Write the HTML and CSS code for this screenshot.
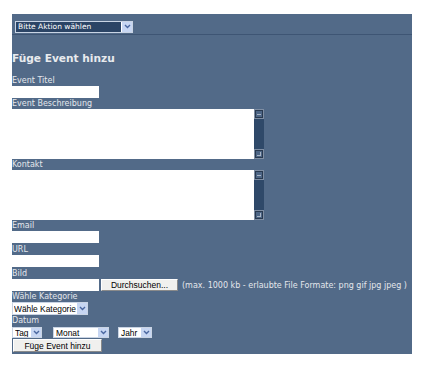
FILE: index.html
```html
<!DOCTYPE html>
<html lang="de">
<head>
    <meta charset="UTF-8">
    <meta name="viewport" content="width=device-width, initial-scale=1.0">
    <title>Füge Event hinzu</title>
    <link rel="stylesheet" href="styles.css">
</head>
<body>
    <div class="panel">

        <!-- Aktion -->
        <div class="topbar">
            <span class="select select-action">
                <select><option>Bitte Aktion wählen</option></select>
                <span class="arrow"><svg width="7" height="5" viewBox="0 0 7 5"><polyline points="1,1 3.5,3.5 6,1" fill="none" stroke="#4a67a0" stroke-width="1.4"/></svg></span>
            </span>
        </div>

        <h2>Füge Event hinzu</h2>

        <form class="event-form">
            <label>Event Titel</label>
            <input class="field field-first" type="text">

            <label>Event Beschreibung</label>
            <div class="textbox">
                <textarea></textarea>
                <div class="scroll">
                    <span class="scroll-btn"><i class="dash"></i></span>
                    <span class="scroll-track"></span>
                    <span class="scroll-btn"><i class="grip"></i></span>
                </div>
            </div>

            <label>Kontakt</label>
            <div class="textbox">
                <textarea></textarea>
                <div class="scroll">
                    <span class="scroll-btn"><i class="dash"></i></span>
                    <span class="scroll-track"></span>
                    <span class="scroll-btn"><i class="grip"></i></span>
                </div>
            </div>

            <label>Email</label>
            <input class="field" type="text">

            <label>URL</label>
            <input class="field" type="text">

            <label>Bild</label>
            <div class="file-row">
                <input class="field" type="text">
                <button type="button" class="btn btn-browse">Durchsuchen...</button>
                <span class="note">(max. 1000 kb - erlaubte File Formate: png gif jpg jpeg )</span>
            </div>

            <label>Wähle Kategorie</label>
            <span class="select select-cat">
                <select><option>Wähle Kategorie</option></select>
                <span class="arrow"><svg width="7" height="5" viewBox="0 0 7 5"><polyline points="1,1 3.5,3.5 6,1" fill="none" stroke="#4a67a0" stroke-width="1.4"/></svg></span>
            </span>

            <label>Datum</label>
            <div class="date-row">
                <span class="select select-tag">
                    <select><option>Tag</option></select>
                    <span class="arrow"><svg width="7" height="5" viewBox="0 0 7 5"><polyline points="1,1 3.5,3.5 6,1" fill="none" stroke="#4a67a0" stroke-width="1.4"/></svg></span>
                </span>
                <span class="select select-monat">
                    <select><option>Monat</option></select>
                    <span class="arrow"><svg width="7" height="5" viewBox="0 0 7 5"><polyline points="1,1 3.5,3.5 6,1" fill="none" stroke="#4a67a0" stroke-width="1.4"/></svg></span>
                </span>
                <span class="select select-jahr">
                    <select><option>Jahr</option></select>
                    <span class="arrow"><svg width="7" height="5" viewBox="0 0 7 5"><polyline points="1,1 3.5,3.5 6,1" fill="none" stroke="#4a67a0" stroke-width="1.4"/></svg></span>
                </span>
            </div>

            <button type="button" class="btn btn-submit">Füge Event hinzu</button>
        </form>
    </div>
</body>
</html>
```

FILE: styles.css
```css
body {
    margin: 0;
    background: #fff;
    font-family: "DejaVu Sans", Verdana, sans-serif;
}
.panel {
    width: 400px;
    margin: 14px 0 0 12px;
    padding-bottom: 2px;
    background: #526a88;
    color: #e4e7ec;
}
.topbar {
    height: 20px;
    border-bottom: 1px solid #3e5574;
}
h2 {
    margin: 16px 0 10px 0;
    font-size: 10.6px;
    line-height: 14px;
    font-weight: bold;
    color: #e8eaee;
}
.event-form {
    display: flex;
    flex-direction: column;
    align-items: flex-start;
}
.event-form label {
    display: block;
    height: 11px;
    line-height: 11px;
    font-size: 8px;
}
.field {
    box-sizing: border-box;
    width: 87px;
    height: 12px;
    margin: 0 0 1px 0;
    padding: 0;
    border: 0;
    background: #fff;
}
.field-first {
    margin-bottom: 0;
}
.textbox {
    display: flex;
    height: 50px;
}
.textbox textarea {
    width: 242px;
    height: 50px;
    box-sizing: border-box;
    margin: 0;
    padding: 0;
    border: 0;
    resize: none;
    background: #fff;
}
.scroll {
    display: flex;
    flex-direction: column;
    width: 10px;
    background: #2f4969;
}
.scroll-btn {
    height: 10px;
    box-sizing: border-box;
    border: 1px solid #7f8ea3;
    outline: 1px solid #28394f;
    outline-offset: -2px;
    background: #4d6585;
    display: flex;
    align-items: center;
    justify-content: center;
}
.scroll-track {
    flex: 1;
}
.dash {
    width: 4px;
    height: 1px;
    background: #a8b4c4;
}
.grip {
    width: 3px;
    height: 3px;
    border-right: 1px solid #a8b4c4;
    border-bottom: 1px solid #a8b4c4;
}
.select {
    display: inline-flex;
    box-sizing: border-box;
    background: #fff;
    border: 1px solid #c9d4e4;
}
.select select {
    appearance: none;
    flex: 1;
    min-width: 0;
    margin: 0;
    padding: 0 0 0 2px;
    border: 0;
    background: transparent;
    color: #000;
    font: 8.4px "Liberation Sans", Arial, sans-serif;
}
.arrow {
    width: 10px;
    display: flex;
    align-items: center;
    justify-content: center;
    background: #c7d6f2;
    border-left: 1px solid #fff;
}
.select-action {
    width: 118px;
    height: 12px;
    margin: 2px 0 0 3px;
}
.select-action select {
    background: #2b4465;
    color: #fff;
    font: 7.5px "DejaVu Sans", Verdana, sans-serif;
}
.select-cat {
    width: 76px;
    height: 13px;
}
.select-cat select {
    padding-left: 1px;
}
.date-row {
    display: flex;
    height: 11px;
    margin-top: 1px;
}
.select-tag {
    width: 30px;
    height: 11px;
    margin-right: 11px;
}
.select-monat {
    width: 56px;
    height: 11px;
    margin-right: 9px;
}
.select-jahr {
    width: 34px;
    height: 11px;
}
.btn {
    box-sizing: border-box;
    margin: 0;
    padding: 0;
    background: #f0f0ee;
    border: 1px solid;
    border-color: #fff #8a8a8a #8a8a8a #fff;
    color: #000;
    font: 8.5px "Liberation Sans", Arial, sans-serif;
}
.file-row {
    display: flex;
    align-items: center;
    height: 12px;
}
.file-row .field {
    margin: 0;
}
.btn-browse {
    width: 77px;
    height: 12px;
    margin-left: 2px;
}
.note {
    margin-left: 4px;
    font-size: 8px;
    white-space: nowrap;
}
.btn-submit {
    width: 89px;
    height: 13px;
    margin: 1px 0 0 1px;
}
```
